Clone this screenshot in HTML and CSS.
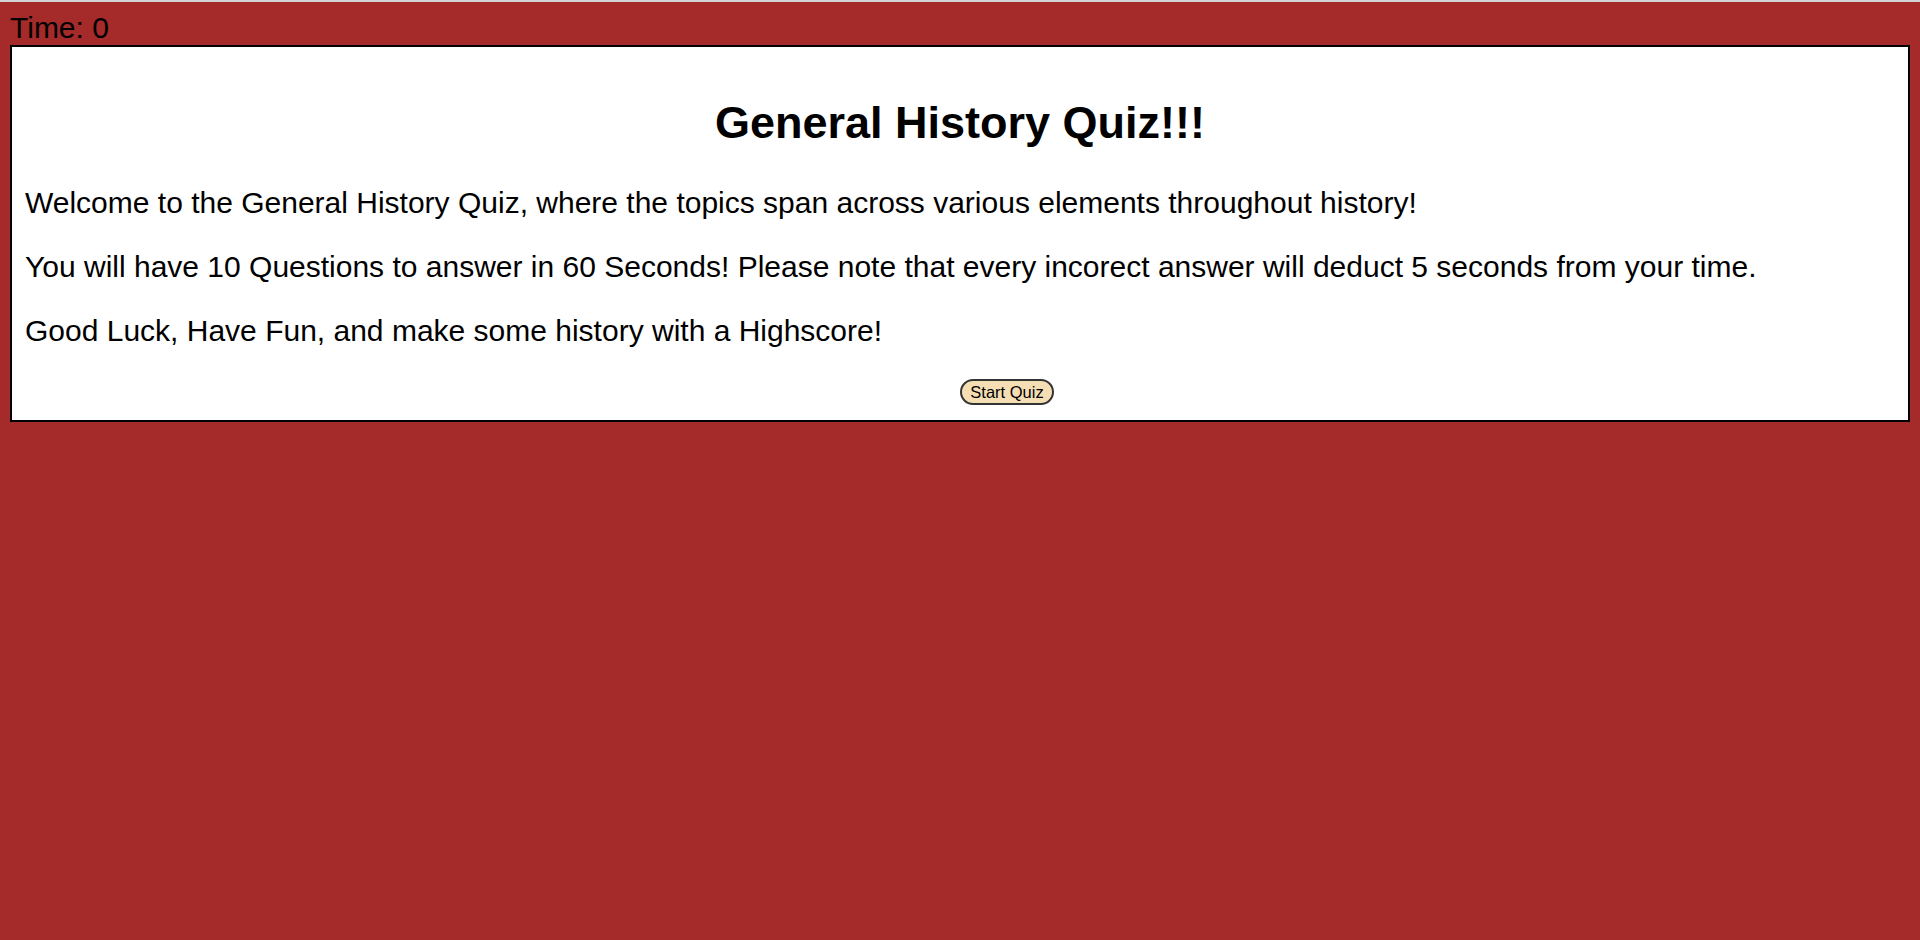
FILE: index.html
```html
<!DOCTYPE html>
<html lang="en">
<head>
<meta charset="utf-8">
<title>General History Quiz</title>
<link rel="stylesheet" href="styles.css">
</head>
<body>
<div class="timer">Time: <span class="time-value">0</span></div>
<main class="card">
  <h1 class="title">General History Quiz!!!</h1>
  <p class="intro">Welcome to the General History Quiz, where the topics span across various elements throughout history!</p>
  <p class="intro">You will have 10 Questions to answer in 60 Seconds! Please note that every incorect answer will deduct 5 seconds from your time.</p>
  <p class="intro">Good Luck, Have Fun, and make some history with a Highscore!</p>
  <div class="actions">
    <button class="start-btn" type="button">Start Quiz</button>
  </div>
</main>
</body>
</html>
```

FILE: styles.css
```css
html {
  background: #a52a2a;
  border-top: 2px solid #d4d4d4;
}

body {
  margin: 8px 10px 10px 10px;
  font-family: "Liberation Sans", Arial, sans-serif;
  color: #000;
}

.timer {
  font-size: 30px;
  line-height: 35px;
}

.card {
  background: #fff;
  border: 2px solid #000;
  padding: 12px 13px 15px 13px;
}

.title {
  font-size: 45px;
  font-weight: bold;
  text-align: center;
  line-height: 51px;
  margin: 38px 0 38px 0;
}

.intro {
  font-size: 30px;
  line-height: 34px;
  margin: 30px 0;
}

.actions {
  display: flex;
  justify-content: center;
  padding-left: 94px;
}

.start-btn {
  font-family: "Liberation Sans", Arial, sans-serif;
  font-size: 16.5px;
  line-height: 20px;
  padding: 1px 8px;
  background: #f5deb3;
  border: 2px solid #333;
  border-radius: 14px;
  color: #000;
  height: 26px;
  margin-top: 1px;
}
```
